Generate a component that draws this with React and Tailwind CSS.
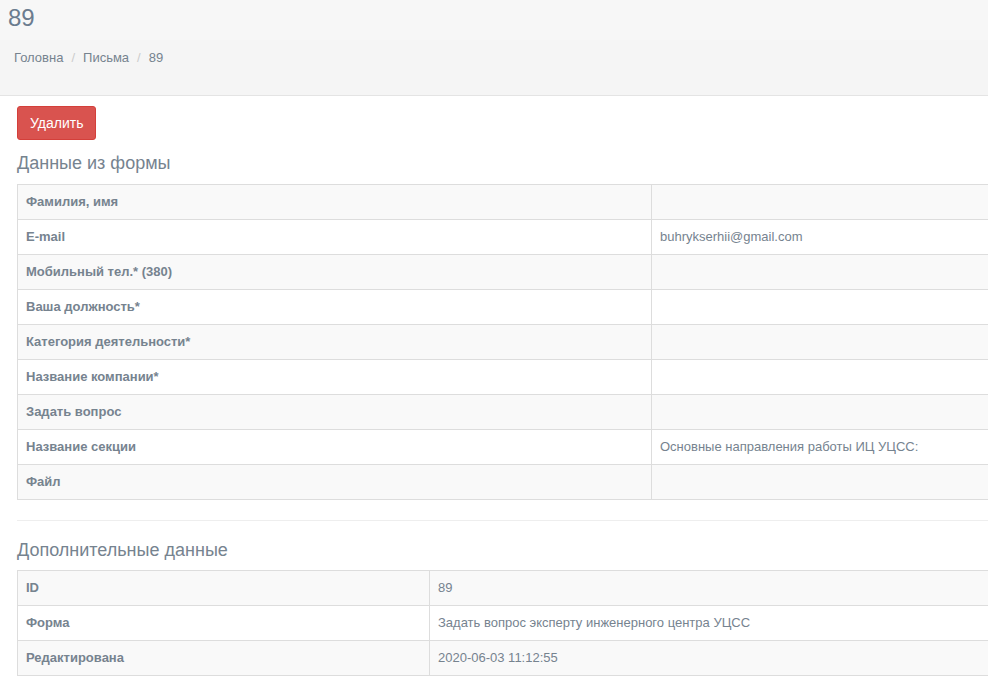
import React from "react";

const formRows = [
  ["Фамилия, имя", ""],
  ["E-mail", "buhrykserhii@gmail.com"],
  ["Мобильный тел.* (380)", ""],
  ["Ваша должность*", ""],
  ["Категория деятельности*", ""],
  ["Название компании*", ""],
  ["Задать вопрос", ""],
  ["Название секции", "Основные направления работы ИЦ УЦСС:"],
  ["Файл", ""],
];

const extraRows = [
  ["ID", "89"],
  ["Форма", "Задать вопрос эксперту инженерного центра УЦСС"],
  ["Редактирована", "2020-06-03 11:12:55"],
];

const DataTable = ({ rows, labelWidth }) => (
  <table className="w-[1300px] border-collapse border border-[#ddd] text-[13px]">
    <tbody>
      {rows.map(([label, value], i) => (
        <tr key={label} className={i % 2 === 0 ? "bg-[#f9f9f9]" : "bg-white"}>
          <td
            className={`h-[35px] border border-[#ddd] px-2 py-0 align-middle font-bold ${labelWidth}`}>
            {label}
          </td>
          <td className="h-[35px] border border-[#ddd] px-2 py-0 align-middle">{value}</td>
        </tr>
      ))}
    </tbody>
  </table>
);

const App = () => {
  return (
    <div
      className="min-h-[694px] w-full overflow-hidden bg-white text-[#76838f]"
      style={{ fontFamily: '"Liberation Sans", Arial, sans-serif' }}>
      <div className="border-b border-[#e4e4e4] bg-[#f5f5f5]">
        <div className="flex h-10 items-start bg-[#f7f7f7] px-2 pt-[6px]">
          <h1 className="text-[24px] leading-[24px] text-[#6b7c8f]">89</h1>
        </div>
        <div className="flex h-[55px] items-start pl-[14px] pt-[8px] text-[13px]">
          <span>Головна</span>
          <span className="px-[8px] text-[#ccc]">/</span>
          <span>Письма</span>
          <span className="px-[8px] text-[#ccc]">/</span>
          <span>89</span>
        </div>
      </div>

      <div className="pl-[17px] pt-[10px]">
        <button className="h-[34px] rounded-[3px] border border-[#d43f3a] bg-[#d9534f] px-3 text-[14px] text-white">
          Удалить
        </button>
        <h3 className="mt-[11px] text-[18px] leading-[24px]">Данные из формы</h3>
        <div className="mt-[9px]">
          <DataTable rows={formRows} labelWidth="w-[634px]" />
        </div>
        <div className="mt-5 h-px w-[1300px] bg-[#eee]"></div>
        <h3 className="mt-[17px] text-[18px] leading-[24px]">Дополнительные данные</h3>
        <div className="mt-[8px]">
          <DataTable rows={extraRows} labelWidth="w-[412px]" />
        </div>
      </div>
    </div>
  );
};

export default App;
